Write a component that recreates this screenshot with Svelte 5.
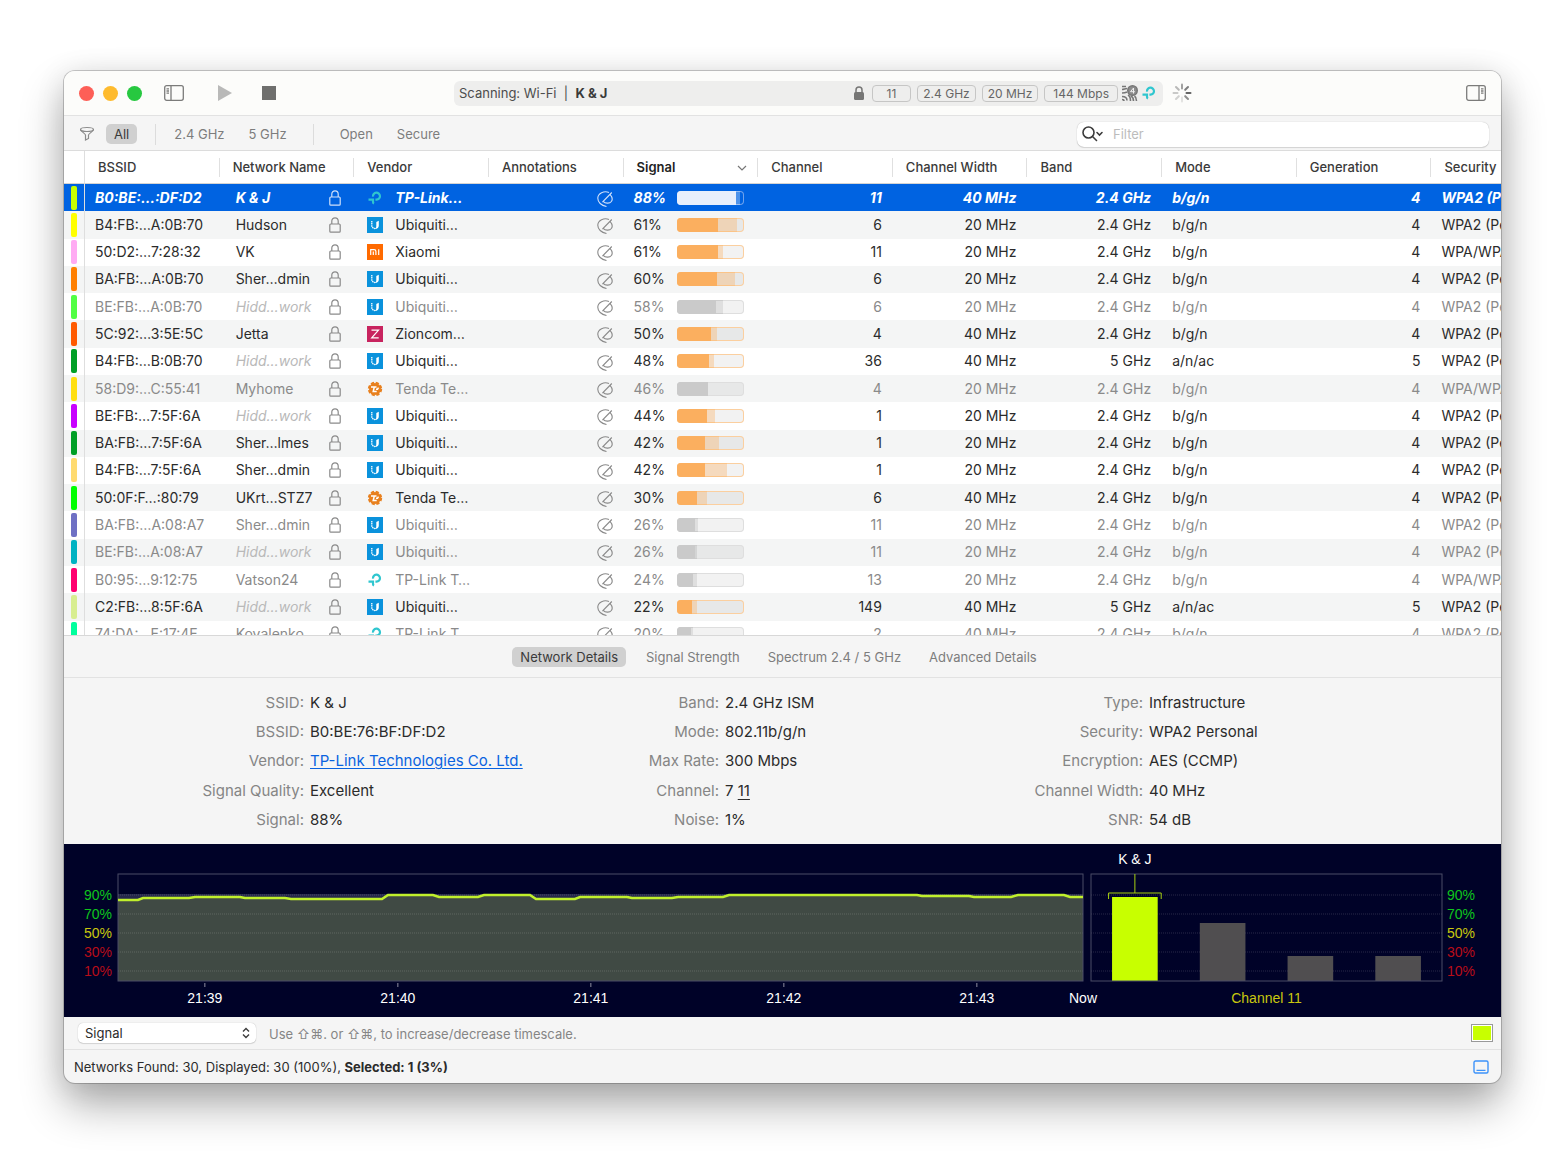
<script>
  const columns = [
    "BSSID",
    "Network Name",
    "Vendor",
    "Annotations",
    "Signal",
    "Channel",
    "Channel Width",
    "Band",
    "Mode",
    "Generation",
    "Security",
  ];

  const networks = [
    { color: "#c8ff00", bssid: "B0:BE:…:DF:D2", name: "K & J", icon: "tplink", vendor: "TP-Link…", signal: 88, peak: 93, channel: 11, width: 40, band: "2.4", mode: "b/g/n", gen: 4, sec: "WPA2 (Personal)" },
    { color: "#ffff00", bssid: "B4:FB:…A:0B:70", name: "Hudson", icon: "ubiquiti", vendor: "Ubiquiti…", signal: 61, peak: 89, channel: 6, width: 20, band: "2.4", mode: "b/g/n", gen: 4, sec: "WPA2 (Personal)" },
    { color: "#ffabf3", bssid: "50:D2:…7:28:32", name: "VK", icon: "xiaomi", vendor: "Xiaomi", signal: 61, peak: 69, channel: 11, width: 20, band: "2.4", mode: "b/g/n", gen: 4, sec: "WPA/WPA2 (Personal)" },
    { color: "#ff7f00", bssid: "BA:FB:…A:0B:70", name: "Sher…dmin", icon: "ubiquiti", vendor: "Ubiquiti…", signal: 60, peak: 87, channel: 6, width: 20, band: "2.4", mode: "b/g/n", gen: 4, sec: "WPA2 (Personal)" },
    { color: "#51ff44", bssid: "BE:FB:…A:0B:70", name: "", icon: "ubiquiti", vendor: "Ubiquiti…", signal: 58, peak: 69, channel: 6, width: 20, band: "2.4", mode: "b/g/n", gen: 4, sec: "WPA2 (Personal)", stale: true },
    { color: "#ff5a00", bssid: "5C:92:…3:5E:5C", name: "Jetta", icon: "zioncom", vendor: "Zioncom…", signal: 50, peak: 60, channel: 4, width: 40, band: "2.4", mode: "b/g/n", gen: 4, sec: "WPA2 (Personal)" },
    { color: "#009f26", bssid: "B4:FB:…B:0B:70", name: "", icon: "ubiquiti", vendor: "Ubiquiti…", signal: 48, peak: 55, channel: 36, width: 40, band: "5", mode: "a/n/ac", gen: 5, sec: "WPA2 (Personal)" },
    { color: "#ffdf10", bssid: "58:D9:…C:55:41", name: "Myhome", icon: "tenda", vendor: "Tenda Te…", signal: 46, peak: 46, channel: 4, width: 20, band: "2.4", mode: "b/g/n", gen: 4, sec: "WPA/WPA2 (Personal)", stale: true },
    { color: "#c800ff", bssid: "BE:FB:…7:5F:6A", name: "", icon: "ubiquiti", vendor: "Ubiquiti…", signal: 44, peak: 57, channel: 1, width: 20, band: "2.4", mode: "b/g/n", gen: 4, sec: "WPA2 (Personal)" },
    { color: "#009f26", bssid: "BA:FB:…7:5F:6A", name: "Sher…lmes", icon: "ubiquiti", vendor: "Ubiquiti…", signal: 42, peak: 62, channel: 1, width: 20, band: "2.4", mode: "b/g/n", gen: 4, sec: "WPA2 (Personal)" },
    { color: "#ffdb70", bssid: "B4:FB:…7:5F:6A", name: "Sher…dmin", icon: "ubiquiti", vendor: "Ubiquiti…", signal: 42, peak: 75, channel: 1, width: 20, band: "2.4", mode: "b/g/n", gen: 4, sec: "WPA2 (Personal)" },
    { color: "#00ff00", bssid: "50:0F:F…:80:79", name: "UKrt…STZ7", icon: "tenda", vendor: "Tenda Te…", signal: 30, peak: 44, channel: 6, width: 40, band: "2.4", mode: "b/g/n", gen: 4, sec: "WPA2 (Personal)" },
    { color: "#6e70c4", bssid: "BA:FB:…A:08:A7", name: "Sher…dmin", icon: "ubiquiti", vendor: "Ubiquiti…", signal: 26, peak: 31, channel: 11, width: 20, band: "2.4", mode: "b/g/n", gen: 4, sec: "WPA2 (Personal)", stale: true },
    { color: "#00b2c2", bssid: "BE:FB:…A:08:A7", name: "", icon: "ubiquiti", vendor: "Ubiquiti…", signal: 26, peak: 29, channel: 11, width: 20, band: "2.4", mode: "b/g/n", gen: 4, sec: "WPA2 (Personal)", stale: true },
    { color: "#ff0070", bssid: "B0:95:…9:12:75", name: "Vatson24", icon: "tplink", vendor: "TP-Link T…", signal: 24, peak: 30, channel: 13, width: 20, band: "2.4", mode: "b/g/n", gen: 4, sec: "WPA/WPA2 (Personal)", stale: true },
    { color: "#d8ee90", bssid: "C2:FB:…8:5F:6A", name: "", icon: "ubiquiti", vendor: "Ubiquiti…", signal: 22, peak: 30, channel: 149, width: 40, band: "5", mode: "a/n/ac", gen: 5, sec: "WPA2 (Personal)" },
    { color: "#00ff9d", bssid: "74:DA:…E:17:4E", name: "Kovalenko", icon: "tplink", vendor: "TP-Link T…", signal: 20, peak: 23, channel: 2, width: 40, band: "2.4", mode: "b/g/n", gen: 4, sec: "WPA2 (Personal)", stale: true },
  ];

  const tabs = ["Network Details", "Signal Strength", "Spectrum 2.4 / 5 GHz", "Advanced Details"];
  let activeTab = $state("Network Details");

  const bandFilters = ["2.4 GHz", "5 GHz"];
  const accessFilters = ["Open", "Secure"];

  let selectedBssid = $state("B0:BE:…:DF:D2");
  let filterText = $state("");
  let metric = $state("Signal");

  const levels = [
    { label: "90%", y: 51, color: "#0fc51c" },
    { label: "70%", y: 70, color: "#0fc51c" },
    { label: "50%", y: 89, color: "#c9c80e" },
    { label: "30%", y: 108, color: "#b80d18" },
    { label: "10%", y: 127, color: "#b80d18" },
  ];

  const times = [
    { label: "21:39", x: 9 },
    { label: "21:40", x: 29 },
    { label: "21:41", x: 49 },
    { label: "21:42", x: 69 },
    { label: "21:43", x: 89 },
  ];

  // signal history, x over a 965 unit wide plot
  const history =
    "0,56 20,56 25,54 71,54 77,53 122,53 127,54 167,54 173,55 264,55 270,51 315,51 321,53 360,53 366,51 412,51 418,55 457,55 462,53 509,53 514,54 554,54 560,53 605,53 611,51 799,51 804,52 851,52 856,53 893,53 900,51 946,51 952,53 965,53";

  const channelBars = [
    { x: 6, y: 53, color: "#c8ff00" },
    { x: 31, y: 79, color: "#504e50" },
    { x: 56, y: 112, color: "#504e50" },
    { x: 81, y: 112, color: "#504e50" },
  ];

  const spokes = [
    { angle: 0, opacity: 0.55 },
    { angle: 45, opacity: 0.75 },
    { angle: 90, opacity: 0.9 },
    { angle: 135, opacity: 0.65 },
    { angle: 180, opacity: 0.15 },
    { angle: 225, opacity: 0.25 },
    { angle: 270, opacity: 0.3 },
    { angle: 315, opacity: 0.4 },
  ];
</script>

{#snippet vendorIcon(kind)}
  <svg class="vendor-icon" viewBox="0 0 16 16" aria-hidden="true">
    {#if kind === "tplink"}
      <path d="M6 6.600A3.500 3.500 0 1 1 9.600 9.700H8.400" fill="none" stroke="#2fc6cf" stroke-width="2.200" />
      <path d="M1.500 9.700H7M6 8.600v3.200a1.800 1.800 0 0 0 1 1.700" fill="none" stroke="#2fc6cf" stroke-width="2.200" />
    {:else if kind === "ubiquiti"}
      <rect width="16" height="16" fill="#0a92dc" />
      <path d="M4.800 4v4.500a3 3 0 0 0 3.200 3" fill="none" stroke="#fff" stroke-width="1.300" stroke-dasharray="1.500 0.600" />
      <path d="M7 12c3 .4 4.800-1 4.800-3.500V3.800L9.300 5v4.200c0 1.300-.8 2.300-2.300 2.800z" fill="#fff" />
    {:else if kind === "xiaomi"}
      <rect width="16" height="16" fill="#ff6a00" />
      <path d="M3.700 11V5.700h3.400c1.200 0 1.800.6 1.800 1.700V11M6.300 11V7.500M11.700 11V5.200" fill="none" stroke="#fff" stroke-width="1.200" />
    {:else if kind === "zioncom"}
      <rect width="16" height="16" fill="#c8245f" />
      <path d="M4.500 4.200h7L4.700 11.800h7" fill="none" stroke="#fff" stroke-width="1.200" />
    {:else}
      <circle cx="8" cy="8" r="6" fill="#e8801e" />
      <circle cx="8" cy="8" r="6.200" fill="none" stroke="#e8801e" stroke-width="2" stroke-dasharray="3.200 1.670" />
      <path d="M4 6h5.500M7.300 6 6.200 10.500h3.500M9 8.200h1.500l1-1.500" fill="none" stroke="#fff" stroke-width="1.500" />
    {/if}
  </svg>
{/snippet}

{#snippet levelLabels(x, anchor)}
  {#each levels as level}
    <text {x} y={level.y + 5} text-anchor={anchor} fill={level.color}>{level.label}</text>
  {/each}
{/snippet}

{#snippet gridLines()}
  {#each levels as level}
    <line x1="0" x2="100%" y1={level.y} y2={level.y} stroke="#fff" stroke-opacity="0.16" stroke-dasharray="1 1" />
  {/each}
{/snippet}

<main>
  <div class="window">
    <header class="toolbar">
      <div class="toolbar-left">
        <button class="light red" aria-label="Close"></button>
        <button class="light yellow" aria-label="Minimize"></button>
        <button class="light green" aria-label="Zoom"></button>
        <button class="tool sidebar" aria-label="Toggle sidebar">
          <svg width="20" height="16" viewBox="0 0 20 16" fill="none" stroke="#7b7b7a" stroke-width="1.300">
            <rect x="0.700" y="0.700" width="18.600" height="14.600" rx="2" />
            <path d="M7 1v14M2.500 3.800h2.500M2.500 6h2.500M2.500 8.200h2.500" />
          </svg>
        </button>
        <button class="tool play" aria-label="Start scan">
          <svg width="16" height="16" viewBox="0 0 16 16"><path d="M1 0l14 8-14 8z" fill="#b9b9b8" /></svg>
        </button>
        <button class="tool" aria-label="Stop scan">
          <svg width="16" height="16" viewBox="0 0 16 16"><path d="M1 1h14v14H1z" fill="#6f6f6d" /></svg>
        </button>
      </div>

      <div class="status">
        <span class="scanning">Scanning: Wi-Fi &nbsp;|&nbsp; <strong>K &amp; J</strong></span>
        <svg class="lock-solid" width="10" height="14" viewBox="0 0 10 14">
          <rect y="6" width="10" height="8" rx="1.500" fill="#767675" />
          <path d="M2 7V4a3 3 0 0 1 6 0v3" fill="none" stroke="#767675" stroke-width="1.500" />
        </svg>
        <span class="pill channel">11</span>
        <span class="pill">2.4 GHz</span>
        <span class="pill">20 MHz</span>
        <span class="pill rate">144 Mbps</span>
        <svg class="wifi4" width="16" height="16" viewBox="0 0 16 16" fill="none" stroke="#777" stroke-width="1.600">
          <path d="M0 1.500h4M0 4.500c2 0 3-1 5-1M0 8c2 0 3 0 5-1M0 11.500c3 0 5 1 5 4M0 14.500c1 0 2 0 2 1.500M6 10c2 1 2.500 3 2.500 6M9 11c2 1 2.500 3 2.500 5M12.500 11c1.500 1 2 3 2 5" />
          <circle cx="10.500" cy="5.500" r="4.700" fill="#8c8c8c" />
          <path d="M11.500 8.500V3L8.500 6.700h4.300" stroke="#eee" stroke-width="1" />
        </svg>
        {@render vendorIcon("tplink")}
      </div>

      <div class="toolbar-right">
        <svg width="20" height="20" viewBox="-10 -10 20 20" stroke="#555" stroke-width="2" stroke-linecap="round" aria-label="Scanning">
          {#each spokes as spoke}
            <line y1="-4.500" y2="-8.500" transform="rotate({spoke.angle})" opacity={spoke.opacity} />
          {/each}
        </svg>
        <button class="tool" aria-label="Toggle inspector">
          <svg width="20" height="16" viewBox="0 0 20 16" fill="none" stroke="#7b7b7a" stroke-width="1.300">
            <rect x="0.700" y="0.700" width="18.600" height="14.600" rx="2" />
            <path d="M13 1v14M15 3.800h2.500M15 6h2.500M15 8.200h2.500" />
          </svg>
        </button>
      </div>
    </header>

    <div class="filters">
      <svg class="funnel" width="16" height="16" viewBox="0 0 16 16" fill="none" stroke="#8a8a8a" stroke-width="1.200">
        <ellipse cx="8" cy="3.500" rx="6.500" ry="2" />
        <path d="M1.500 3.500c0 2 5 4 5 5.500v5l3-1.500V9c0-1.500 5-3.500 5-5.500" />
      </svg>
      <button class="filter active">All</button>
      <span class="divider"></span>
      {#each bandFilters as label}
        <button class="filter">{label}</button>
      {/each}
      <span class="divider wide"></span>
      {#each accessFilters as label}
        <button class="filter">{label}</button>
      {/each}
      <label class="search">
        <svg width="22" height="16" viewBox="0 0 22 16" fill="none" stroke="#3c3c3c" stroke-width="1.600" stroke-linecap="round">
          <circle cx="6.500" cy="6.500" r="5.500" />
          <path d="M10.500 10.500l4 4" />
          <path d="M15 6.500l2.500 2.500 2.500-2.500" />
        </svg>
        <input type="text" placeholder="Filter" aria-label="Filter" bind:value={filterText} />
      </label>
    </div>

    <div class="table-area">
      <table>
        <colgroup>
          <col class="col-color" />
          {#each columns.slice(0, -1) as _}
            <col class="col-data" />
          {/each}
          <col class="col-last" />
        </colgroup>
        <thead>
          <tr>
            <th class="swatch-cell"></th>
            {#each columns as column}
              <th>
                {#if column === "Signal"}
                  <div class="sorted">
                    Signal
                    <svg width="10" height="6" viewBox="0 0 10 6" fill="none" stroke="#777" stroke-width="1.200"><path d="M1 1l4 4 4-4" /></svg>
                  </div>
                {:else}
                  <div>{column}</div>
                {/if}
              </th>
            {/each}
          </tr>
        </thead>
        <tbody>
          {#each networks as net}
            <tr
              class:selected={net.bssid === selectedBssid}
              class:stale={net.stale}
              onclick={() => (selectedBssid = net.bssid)}
            >
              <td class="swatch-cell"><span class="swatch" style="background: {net.color}"></span></td>
              <td>{net.bssid}</td>
              <td>
                <div class="name">
                  <span class:hidden-name={!net.name}>{net.name || "Hidd…work"}</span>
                  <svg width="12" height="16" viewBox="0 0 12 16" fill="none" stroke="currentColor" stroke-width="1.200">
                    <rect x="0.800" y="7" width="10.400" height="8.200" rx="1" />
                    <path d="M2.800 7V4a3.200 3.200 0 0 1 6.400 0v3" />
                  </svg>
                </div>
              </td>
              <td><div class="vendor">{@render vendorIcon(net.icon)}{net.vendor}</div></td>
              <td class="note">
                <svg width="16" height="16" viewBox="0 0 16 16" fill="none" stroke="currentColor" stroke-width="1.100">
                  <path d="M12 1.500C7-.5 1 2.200.8 7c-.1 4.200 3.500 7.600 8.700 8.500" />
                  <path d="M14.800 1.500 6.200 10.300c2 2.200 6.300 2.600 8.200.2 1.400-2 .8-4.500-1.200-6.800M6.200 10.300l-.8.800" />
                </svg>
              </td>
              <td>
                <div class="signal">
                  <span>{net.signal}%</span>
                  <div class="meter">
                    <i class="peak" style="width: {net.peak}%"></i>
                    <i class="level" style="width: {net.signal}%"></i>
                  </div>
                </div>
              </td>
              <td class="num">{net.channel}</td>
              <td class="num">{net.width} MHz</td>
              <td class="num">{net.band} GHz</td>
              <td>{net.mode}</td>
              <td class="num">{net.gen}</td>
              <td>{net.sec}</td>
            </tr>
          {/each}
        </tbody>
      </table>
    </div>

    <nav class="tabs">
      {#each tabs as tab}
        <button class="filter" class:active={tab === activeTab} onclick={() => (activeTab = tab)}>{tab}</button>
      {/each}
    </nav>

    <section class="details">
      <dl class="first">
        <dt>SSID:</dt><dd>K &amp; J</dd>
        <dt>BSSID:</dt><dd>B0:BE:76:BF:DF:D2</dd>
        <dt>Vendor:</dt><dd><a href="#vendor">TP-Link Technologies Co. Ltd.</a></dd>
        <dt>Signal Quality:</dt><dd>Excellent</dd>
        <dt>Signal:</dt><dd>88%</dd>
      </dl>
      <dl class="second">
        <dt>Band:</dt><dd>2.4 GHz ISM</dd>
        <dt>Mode:</dt><dd>802.11b/g/n</dd>
        <dt>Max Rate:</dt><dd>300 Mbps</dd>
        <dt>Channel:</dt><dd>7 <u>11</u></dd>
        <dt>Noise:</dt><dd>1%</dd>
      </dl>
      <dl class="third">
        <dt>Type:</dt><dd>Infrastructure</dd>
        <dt>Security:</dt><dd>WPA2 Personal</dd>
        <dt>Encryption:</dt><dd>AES (CCMP)</dd>
        <dt>Channel Width:</dt><dd>40 MHz</dd>
        <dt>SNR:</dt><dd>54 dB</dd>
      </dl>
    </section>

    <section class="charts">
      <svg class="history">
        {@render levelLabels(-6, "end")}
        <rect x="0" y="50" width="100%" height="87" fill="#25284a" />
        <svg x="0" y="0" width="100%" height="173" viewBox="0 0 965 173" preserveAspectRatio="none">
          <polygon points="0,137 {history} 965,137" fill="#404a44" />
        </svg>
        {@render gridLines()}
        <rect class="frame" x="0" y="30" width="100%" height="107" />
        <svg x="0" y="0" width="100%" height="173" viewBox="0 0 965 173" preserveAspectRatio="none">
          <polyline points={history} fill="none" stroke="#c0f02c" stroke-width="2.500" />
        </svg>
        {#each times as time}
          <line x1="{time.x}%" x2="{time.x}%" y1="139" y2="143" stroke="#8e8fa0" />
          <text x="{time.x}%" y="159" text-anchor="middle" fill="#fff">{time.label}</text>
        {/each}
        <text x="100%" y="159" text-anchor="middle" fill="#fff">Now</text>
      </svg>
      <svg class="channels">
        {@render gridLines()}
        {#each channelBars as bar}
          <rect x="{bar.x}%" y={bar.y} width="13%" height={137 - bar.y} fill={bar.color} />
        {/each}
        <rect class="frame" x="0" y="30" width="100%" height="107" />
        <g stroke="#a6d010">
          <line x1="12.500%" x2="12.500%" y1="30" y2="49" />
          <line x1="5%" x2="20%" y1="49" y2="49" />
          <line x1="5%" x2="5%" y1="49" y2="55" />
          <line x1="20%" x2="20%" y1="49" y2="55" />
        </g>
        <text x="12.500%" y="20" text-anchor="middle" fill="#fff">K &amp; J</text>
        <text x="50%" y="159" text-anchor="middle" fill="#c9c80e">Channel 11</text>
        <svg x="100%" y="0" overflow="visible">
          {@render levelLabels(5, "start")}
        </svg>
      </svg>
    </section>

    <div class="metric-bar">
      <div class="metric">
        <select bind:value={metric} aria-label="Chart metric">
          <option>Signal</option>
          <option>Noise</option>
        </select>
        <svg width="8" height="12" viewBox="0 0 8 12" fill="none" stroke="#3c3c3c" stroke-width="1.400"><path d="M1 4.500l3-3 3 3M1 7.500l3 3 3-3" /></svg>
      </div>
      <span class="hint">Use ⇧⌘. or ⇧⌘, to increase/decrease timescale.</span>
      <button class="color-well" aria-label="Network color"><span></span></button>
    </div>

    <footer>
      <span>Networks Found: 30, Displayed: 30 (100%), <strong>Selected: 1 (3%)</strong></span>
      <button class="tool" aria-label="Toggle details">
        <svg width="16" height="14" viewBox="0 0 16 14" fill="none" stroke="#3d93fa" stroke-width="1.400">
          <rect x="1" y="1" width="14" height="12" rx="1.500" />
          <path d="M3.500 10.400h9" />
        </svg>
      </button>
    </footer>
  </div>
</main>

<style>
  :global(body) {
    margin: 0;
    background: #fff;
  }

  main {
    padding: 71px 59px 93px 64px;
    font-family: Inter, "Liberation Sans", sans-serif;
    font-size: 14px;
    color: #2b2b2b;
  }

  .window {
    display: flex;
    flex-direction: column;
    overflow: hidden;
    border-radius: 11px;
    background: #f5f5f5;
    box-shadow: 0 0 0 1px rgba(0, 0, 0, 0.2), 0 22px 44px rgba(0, 0, 0, 0.32), 0 4px 30px rgba(0, 0, 0, 0.1);
  }

  button {
    padding: 0;
    border: none;
    background: none;
    font: inherit;
  }

  .tool {
    display: flex;
  }

  .toolbar {
    display: flex;
    align-items: center;
    height: 44px;
    background: #fcfcfa;
    border-bottom: 1px solid #e2e2e2;
  }

  .toolbar-left {
    display: flex;
    flex: 0 0 375px;
    align-items: center;
    padding-left: 15px;
  }

  .light {
    width: 15px;
    height: 15px;
    margin-right: 9px;
    border-radius: 50%;
  }

  .red {
    background: #fd5f57;
  }

  .yellow {
    background: #febb2e;
  }

  .green {
    background: #27c840;
  }

  .sidebar {
    margin-left: 13px;
  }

  .play {
    margin: 0 28px 0 33px;
  }

  .status {
    display: flex;
    flex: 1;
    align-items: center;
    height: 25px;
    padding: 0 6px 0 5px;
    border-radius: 6px;
    background: #eeeeed;
    font-size: 13px;
    color: #4c4c4c;
  }

  .status strong {
    color: #3a3a3a;
  }

  .scanning {
    flex: 1;
  }

  .lock-solid {
    margin-right: 8px;
  }

  .pill {
    margin-right: 6px;
    padding: 0 5px;
    border: 1px solid #c6c6c5;
    border-radius: 4px;
    font-size: 12px;
    line-height: 15px;
    color: #666;
  }

  .pill.channel {
    padding: 0 14px;
  }

  .pill.rate {
    margin-right: 4px;
    padding: 0 8px;
  }

  .wifi4 {
    margin-right: 3px;
  }

  .toolbar-right {
    display: flex;
    flex: 0 0 314px;
    align-items: center;
    justify-content: space-between;
    padding: 0 15px 0 9px;
  }

  .filters {
    display: flex;
    align-items: center;
    height: 32px;
    padding: 2px 12px 0 15px;
    border-bottom: 1px solid #dcdcdc;
  }

  .funnel {
    margin-right: 11px;
  }

  .filter {
    height: 20px;
    margin-right: 8px;
    padding: 0 8px;
    border-radius: 5px;
    font-size: 13px;
    color: #7d7d7d;
  }

  .filter.active {
    background: #d0d0d0;
    color: #3a3a3a;
  }

  .divider {
    width: 1px;
    height: 21px;
    margin: 0 10px;
    background: #dcdcdc;
  }

  .divider.wide {
    margin-right: 18px;
  }

  .search {
    display: flex;
    flex: 0 0 407px;
    align-items: center;
    height: 25px;
    margin-left: auto;
    padding-left: 5px;
    border-radius: 7px;
    background: #fff;
    box-shadow: 0 0 1px rgba(0, 0, 0, 0.3), 0 1px 1px rgba(0, 0, 0, 0.12);
  }

  .search input {
    flex: 1;
    padding: 0 9px;
    border: none;
    outline: none;
    background: none;
    font: inherit;
    font-size: 13px;
  }

  .search input::placeholder {
    color: #bcbcbc;
  }

  .table-area {
    height: 484px;
    overflow: hidden;
    background: #fff;
    border-bottom: 1px solid #d8d8d8;
  }

  table {
    width: 100%;
    height: 497px;
    table-layout: fixed;
    border-collapse: separate;
    border-spacing: 0;
  }

  .col-color {
    width: 21px;
  }

  .col-data {
    width: 9.370%;
  }

  th,
  td {
    padding: 0 11px 0 10px;
    overflow: hidden;
    text-align: left;
    white-space: nowrap;
  }

  th {
    height: 33px;
    box-sizing: border-box;
    padding: 1px 0 0;
    border-bottom: 1px solid #d4d4d4;
    font-size: 13px;
    font-weight: 500;
    color: #3a3a3a;
  }

  th div {
    padding: 0 12px 0 13px;
    border-right: 1px solid #e0e0e0;
    line-height: 19px;
  }

  th:last-child div {
    border-right: none;
    padding-right: 0;
  }

  th .sorted {
    display: flex;
    align-items: center;
    justify-content: space-between;
    padding-right: 10px;
    font-weight: 600;
    color: #222;
  }

  td {
    height: 27px;
    line-height: 20px;
  }

  .swatch-cell {
    padding: 0 0 0 7px;
    border-right: 1px solid #dedede;
  }

  .swatch {
    display: block;
    width: 6px;
    height: 24px;
    border-radius: 2px;
  }

  tbody tr:nth-child(even) {
    background: #f4f5f5;
  }

  .stale {
    color: #8a8a8a;
  }

  tbody .selected {
    background: #0063e1;
    color: #fff;
    font-style: italic;
    font-weight: 700;
  }

  .name {
    display: flex;
    align-items: center;
    justify-content: space-between;
    padding: 0 2px 0 6px;
  }

  .hidden-name {
    font-style: italic;
    color: #b9b9b9;
  }

  .name svg,
  .note svg {
    color: #8a8a8a;
  }

  .selected .name svg,
  .selected .note svg {
    color: #cfe0fa;
  }

  .vendor {
    display: flex;
    align-items: center;
    gap: 12px;
    padding-left: 3px;
  }

  .vendor-icon {
    flex: none;
    width: 16px;
    height: 16px;
  }

  .note {
    text-align: right;
  }

  .note svg {
    display: inline-block;
    vertical-align: middle;
  }

  .signal {
    display: flex;
    align-items: center;
    justify-content: space-between;
    padding-right: 3px;
  }

  .meter {
    display: grid;
    width: 67px;
    height: 14px;
    overflow: hidden;
    border-radius: 4px;
    background: rgba(0, 0, 0, 0.05);
    box-shadow: inset 0 0 0 1px #fbcf9f;
  }

  .meter i {
    grid-area: 1 / 1;
    height: 14px;
  }

  .peak {
    background: rgba(252, 175, 95, 0.35);
  }

  .level {
    background: #fbaf5f;
  }

  .stale .meter {
    box-shadow: inset 0 0 0 1px #dedede;
  }

  .stale .peak {
    background: rgba(0, 0, 0, 0.08);
  }

  .stale .level {
    background: #cacaca;
  }

  .selected .meter {
    background: none;
    box-shadow: inset 0 0 0 1px #6fa2ec;
  }

  .selected .peak {
    background: rgba(255, 255, 255, 0.3);
  }

  .selected .level {
    background: #e8effc;
  }

  .num {
    text-align: right;
  }

  .tabs {
    display: flex;
    align-items: center;
    justify-content: center;
    gap: 4px;
    height: 41px;
    border-bottom: 1px solid #e2e2e2;
  }

  .details {
    display: flex;
    height: 146px;
    padding: 10px 0;
    font-size: 15px;
    line-height: 29px;
  }

  dl {
    display: grid;
    margin: 0;
  }

  .first {
    flex: 475;
    grid-template-columns: 240fr 235fr;
  }

  .second {
    flex: 424;
    grid-template-columns: 180fr 244fr;
  }

  .third {
    flex: 538;
    grid-template-columns: 180fr 358fr;
  }

  dt {
    text-align: right;
    color: #858585;
  }

  dd {
    margin: 0;
    padding-left: 6px;
    white-space: nowrap;
  }

  a {
    color: #0a63e0;
    text-underline-offset: 2px;
  }

  u {
    text-underline-offset: 3px;
  }

  .charts {
    display: flex;
    gap: 8px;
    height: 173px;
    padding: 0 59px 0 54px;
    background: #000228;
    font-family: "Liberation Sans", Arial, sans-serif;
    font-size: 14px;
  }

  .charts > svg {
    min-width: 0;
    height: 173px;
    overflow: visible;
  }

  .history {
    flex: 965;
  }

  .channels {
    flex: 351;
  }

  .frame {
    fill: none;
    stroke: #4a4c66;
  }

  .metric-bar {
    display: flex;
    align-items: center;
    height: 32px;
    padding: 0 8px 0 14px;
    border-bottom: 1px solid #e2e2e2;
  }

  .metric {
    display: flex;
    align-items: center;
    width: 178px;
    height: 20px;
    border-radius: 5px;
    background: #fff;
    box-shadow: 0 0 1px rgba(0, 0, 0, 0.3), 0 1px 1px rgba(0, 0, 0, 0.12);
  }

  .metric select {
    flex: 1;
    height: 20px;
    padding: 0 7px;
    border: none;
    appearance: none;
    background: none;
    font: inherit;
    font-size: 13px;
    color: inherit;
  }

  .metric svg {
    margin-right: 6px;
    pointer-events: none;
  }

  .hint {
    flex: 1;
    padding: 2px 0 0 13px;
    font-family: Inter, "DejaVu Sans", sans-serif;
    font-size: 13px;
    color: #858585;
  }

  .color-well {
    width: 22px;
    height: 18px;
    padding: 1px;
    border: 1px solid #999;
    background: #fff;
  }

  .color-well span {
    display: block;
    height: 100%;
    background: #c8ff00;
  }

  footer {
    display: flex;
    align-items: center;
    justify-content: space-between;
    height: 33px;
    padding: 0 12px 0 10px;
    font-size: 13px;
  }
</style>
